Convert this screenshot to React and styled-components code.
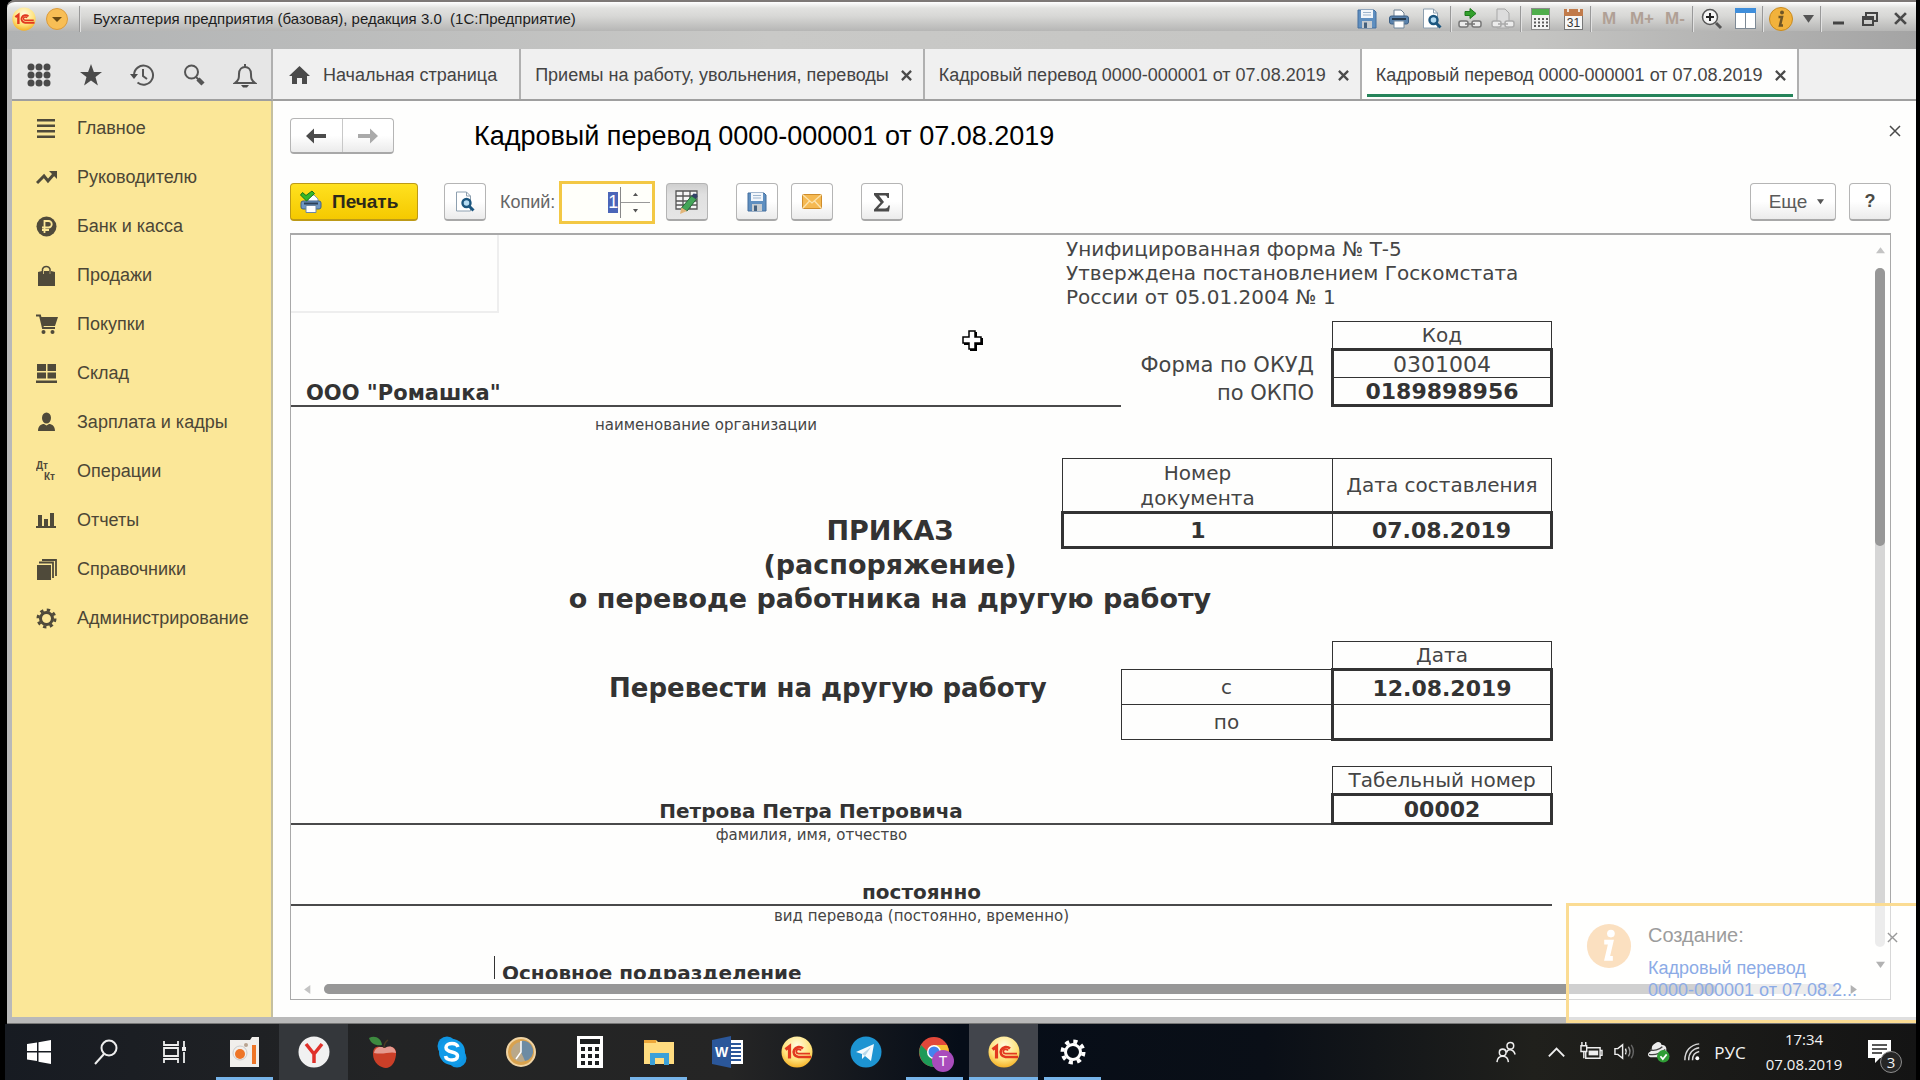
import React, { useEffect, useRef } from 'react';
import styled, { createGlobalStyle, css } from 'styled-components';

const GlobalStyle = createGlobalStyle`
  * {
    box-sizing: border-box;
  }

  body {
    margin: 0;
    background: #000;
    font-family: 'Liberation Sans', Arial, sans-serif;
    font-size: 18px;
    color: #4b4b45;
  }

  button {
    padding: 0;
    border: none;
    background: none;
    font: inherit;
    color: inherit;
  }

  svg {
    display: block;
    flex: none;
  }
`;

const Screen = styled.div`
  position: relative;
  display: flex;
  flex-direction: column;
  height: 100vh;
  overflow: hidden;
`;

/* ---------- 1C window ---------- */

const Window = styled.div`
  flex: 1;
  min-height: 0;
  display: flex;
  flex-direction: column;
  margin: 0 4px 0 7px;
  padding: 0 0 6px 5px;
  border-bottom: 1px solid #777;
  border-radius: 8px 0 0 0;
  background: #b9b9b9;
`;

const TitleBar = styled.header`
  height: 49px;
  flex: none;
  margin-left: -5px;
  padding: 4px 0 18px 5px;
  display: flex;
  align-items: center;
  border-top: 2px solid #7d7876;
  border-radius: 8px 0 0 0;
  background: linear-gradient(90deg, #b0b2b3, #c9c9c7 40%, #c4c4c2 80%, #a4a4a4) 0 29px / 100% 18px no-repeat,
    linear-gradient(#fff 0, #e2e2e0 6px, #d8d8d6 14px, #b6b6b5 29px);
`;

const RoundButton = styled.button`
  width: 24px;
  height: 24px;
  margin-right: 9px;
`;

const TitleText = styled.h1`
  flex: 1;
  margin: 0;
  padding-left: 11px;
  font-size: 15px;
  font-weight: normal;
  white-space: pre;
  color: #1d1d1d;
`;

const TitleTools = styled.div`
  display: flex;
  align-items: center;
`;

const ToolIcon = styled.button`
  width: ${p => p.$width || 34}px;
  height: 24px;
  display: flex;
  align-items: center;
  justify-content: center;
  font-size: 17px;
  font-weight: bold;
  color: #b0a095;
`;

const Separator = styled.span`
  width: 2px;
  height: 26px;
  margin: 0 1px;
  border-left: 1px solid #999;
  border-right: 1px solid #e2e2e2;
`;

const Workspace = styled.div`
  flex: 1;
  min-height: 0;
  display: grid;
  grid-template-columns: 261px 1fr;
  grid-template-rows: 52px 1fr;
  background: #fefefd;
`;

const QuickTools = styled.div`
  display: flex;
  align-items: center;
  justify-content: space-between;
  padding: 2px 13px 0 14px;
  border-right: 2px solid #b0b0b0;
  border-bottom: 2px solid #9f9f9f;
  background: #e6e6e6;
  button {
    width: 26px;
    display: flex;
    justify-content: center;
  }
`;

const Tabs = styled.nav`
  display: flex;
  border-bottom: 2px solid #9f9f9f;
  background: #f0f0f0;
`;

const Tab = styled.div`
  position: relative;
  display: flex;
  align-items: center;
  gap: 12px;
  padding: 2px 11px 0 14px;
  border-right: 2px solid #b0b0b0;
  white-space: nowrap;
  color: #444;
  ${p =>
    p.$active &&
    css`
      background: #fefefd;
      &::after {
        content: '';
        position: absolute;
        left: 5px;
        right: 4px;
        bottom: 2px;
        height: 3px;
        background: #26845a;
      }
    `}
`;

const HomeTab = styled(Tab)`
  gap: 13px;
  padding: 2px 22px 0 16px;
`;

const Sidebar = styled.ul`
  margin: 0;
  padding: 3px 0 0;
  list-style: none;
  border-right: 2px solid #c5c0a0;
  background: #fbe798;
`;

const SideLink = styled.a`
  height: 49px;
  display: flex;
  align-items: center;
  gap: 19px;
  padding-left: 24px;
  color: #4b4636;
  text-decoration: none;
`;

const Main = styled.main`
  min-width: 0;
  min-height: 0;
  display: flex;
  flex-direction: column;
  padding: 17px 25px 17px 17px;
`;

const FormHead = styled.div`
  height: 36px;
  display: flex;
  align-items: center;
  margin-bottom: 26px;
  h2 {
    flex: 1;
    margin: 0;
    padding-left: 80px;
    font-size: 27px;
    font-weight: normal;
    line-height: 38px;
    color: #000;
  }
`;

const raised = css`
  border: 1px solid #b5b5b5;
  border-bottom: 2px solid #a8a8a8;
  border-radius: 4px;
  background: linear-gradient(#fff 50%, #ebebeb);
`;

const History = styled.div`
  ${raised}
  display: flex;
  width: 104px;
  height: 36px;
  button {
    flex: 1;
    display: flex;
    align-items: center;
    justify-content: center;
  }
  button + button {
    border-left: 1px solid #c8c8c8;
  }
`;

const CloseForm = styled.button`
  align-self: flex-start;
  margin: 7px -10px 0 0;
`;

const CommandBar = styled.div`
  height: 44px;
  display: flex;
  align-items: center;
  margin-bottom: 9px;
`;

const Button = styled.button`
  ${raised}
  width: ${p => p.$width || 42}px;
  height: 38px;
  margin-left: ${p => p.$gap || 0}px;
  display: flex;
  align-items: center;
  justify-content: center;
  gap: 10px;
  ${p =>
    p.$pressed &&
    css`
      background: linear-gradient(#cfcfcf, #e0e0e0 30%, #e6e6e6);
    `}
`;

const PrintButton = styled(Button)`
  justify-content: flex-start;
  padding-left: 9px;
  border-color: #bd9a17;
  background: linear-gradient(#ffe11f, #f5c900);
  font-size: 19px;
  font-weight: bold;
  color: #2c2a1a;
`;

const MoreButton = styled(Button)`
  padding-left: 7px;
  font-size: 19px;
  color: #5a5a5a;
`;

const CopiesLabel = styled.label`
  margin: 0 4px 0 14px;
  color: #666;
`;

const Spinner = styled.div`
  width: 96px;
  height: 43px;
  display: flex;
  align-items: center;
  padding: 3px 2px;
  border: 3px solid #f3c844;
  background: #fffffa;
  input {
    flex: 1;
    min-width: 0;
    padding: 0 2px 0 0;
    border: none;
    outline: none;
    background: none;
    font: inherit;
    text-align: right;
    color: #333;
  }
  input::selection {
    background: #4c66b8;
    color: #fff;
  }
`;

const Steps = styled.div`
  width: 30px;
  align-self: stretch;
  display: flex;
  flex-direction: column;
  border-left: 1px solid #888;
  button {
    flex: 1;
    display: flex;
    align-items: center;
    justify-content: center;
  }
  button + button {
    border-top: 1px solid #999;
  }
`;

const Grow = styled.span`
  flex: 1;
`;

/* ---------- printed form ---------- */

const Viewer = styled.section`
  position: relative;
  flex: 1;
  min-height: 0;
  display: grid;
  grid-template-columns: 1fr 20px;
  grid-template-rows: 1fr 20px;
  border: 1px solid #a9a9a9;
  border-top-width: 2px;
`;

const Paper = styled.div`
  overflow: hidden;
  font-family: 'DejaVu Sans', Verdana, sans-serif;
  font-size: 20px;
  color: #454545;
`;

const Sheet = styled.div`
  width: 1262px;
`;

const SheetTop = styled.div`
  height: 86px;
  display: grid;
  grid-template-columns: 775px 1fr;
`;

const EmptyPicture = styled.div`
  width: 208px;
  height: 78px;
  border-right: 2px solid #eee;
  border-bottom: 2px solid #eee;
`;

const FormNote = styled.p`
  margin: 0;
  padding-top: 2px;
  line-height: 24px;
  white-space: nowrap;
`;

const Row = styled.div`
  display: flex;
  align-items: flex-end;
`;

const Underlined = styled.div`
  width: ${p => p.$width}px;
  padding: ${p => (p.$left ? '0 0 0 15px' : '0')};
  border-bottom: 2px solid #4a4a4a;
  font-size: ${p => (p.$left ? 21 : 20)}px;
  line-height: 24px;
  font-weight: bold;
  text-align: ${p => (p.$left ? 'left' : 'center')};
  color: #333;
`;

const Caption = styled.p`
  width: ${p => p.$width}px;
  margin: 0;
  padding-top: ${p => p.$gap || 0}px;
  font-size: 15px;
  line-height: 20px;
  text-align: center;
`;

const CodeLabels = styled.div`
  flex: 1;
  padding-right: 17px;
  line-height: 28px;
  text-align: right;
  font-size: 21px;
`;

const FormTable = styled.table`
  width: ${p => p.$width}px;
  border-collapse: collapse;
  table-layout: fixed;
  color: #454545;
`;

const Cell = styled.td`
  width: ${p => (p.$width ? `${p.$width}px` : 'auto')};
  height: ${p => p.$height || 28}px;
  padding: 1px 0 0;
  border: ${p => (p.$blank ? 'none' : '1px solid #333')};
  font-size: ${p => (p.$value ? 22 : 20)}px;
  font-weight: ${p => (p.$bold ? 'bold' : 'normal')};
  line-height: 25px;
  text-align: center;
  vertical-align: middle;
  color: ${p => (p.$bold ? '#333' : 'inherit')};
`;

const StrongRows = styled.tbody`
  border: 3px solid #333;
`;

const StrongCell = styled(Cell)`
  border-left: 3px solid #333;
  border-right: 3px solid #333;
  border-${p => p.$edge}: 3px solid #333;
`;

const OrderHead = styled.div`
  display: grid;
  grid-template-columns: 770px 1fr;
  grid-template-rows: 90px auto;
  margin-top: 23px;
`;

const OrderNumber = styled.div`
  grid-area: 1 / 2;
`;

const OrderTitle = styled.h3`
  grid-area: 1 / 1 / 3 / 3;
  margin: 0;
  padding: 56px 64px 0 0;
  font-size: 27px;
  line-height: 34px;
  text-align: center;
  color: #333;
`;

const Transfer = styled.div`
  display: flex;
  margin-top: 25px;
  h4 {
    flex: 1;
    margin: 0;
    padding: 30px 0 0 318px;
    font-size: 26px;
    line-height: 34px;
    white-space: nowrap;
    color: #333;
  }
`;

const Person = styled(Row)`
  margin-top: 25px;
`;

const Kind = styled.div`
  margin-top: 35px;
`;

const Department = styled.div`
  margin: 30px 0 0 203px;
  padding: 5px 0 0 7px;
  border-left: 1px solid #333;
  font-weight: bold;
  line-height: 24px;
  color: #333;
`;

const VScroll = styled.div`
  display: flex;
  flex-direction: column;
  align-items: center;
  padding: 11px 0 10px;
`;

const HScroll = styled.div`
  display: flex;
  align-items: center;
  padding: 0 12px 0 12px;
`;

const Track = styled.div`
  flex: 1;
  display: flex;
  flex-direction: inherit;
  margin: ${p => (p.$vertical ? '13px 0' : '0 12px')};
  width: ${p => (p.$vertical ? '10px' : 'auto')};
  height: ${p => (p.$vertical ? 'auto' : '10px')};
  border-radius: 5px;
  background: #d6d6d6;
`;

const Thumb = styled.div`
  flex: 0 0 ${p => p.$size};
  border-radius: 5px;
  background: #979797;
`;

const CrossCursor = styled.svg`
  position: absolute;
  left: 671px;
  top: 95px;
`;

/* ---------- toast ---------- */

const Toast = styled.aside`
  position: absolute;
  right: 4px;
  bottom: 57px;
  width: 350px;
  height: 120px;
  display: flex;
  gap: 16px;
  padding: 17px 18px 0 17px;
  border: 3px solid #fbdc93;
  border-right: none;
  background: rgba(255, 255, 255, 0.55);
  h5 {
    margin: 0 0 10px;
    font-size: 20px;
    font-weight: normal;
    line-height: 24px;
    color: #9c9c9c;
  }
  a {
    font-size: 18px;
    line-height: 22px;
    text-decoration: none;
    color: #8cabe6;
  }
`;

const ToastClose = styled.button`
  align-self: flex-start;
  margin: 9px 0 0 auto;
`;

/* ---------- taskbar ---------- */

const TaskBar = styled.footer`
  height: 56px;
  flex: none;
  display: flex;
  margin: 0 4px 0 5px;
  background: linear-gradient(90deg, #171b22, #232425 20%, #252525 38%, #060d18 50%, #0a0f17 66%, #20201c 80%, #141414);
  color: #f3f3f3;
`;

const Task = styled.button`
  position: relative;
  width: 69px;
  display: flex;
  align-items: center;
  justify-content: center;
  background: ${p => (p.$lit ? p.$lit : 'transparent')};
  &:first-child {
    width: 67px;
  }
  ${p =>
    p.$open &&
    css`
      &::after {
        content: '';
        position: absolute;
        left: ${p.$open === 'full' ? 0 : 6}px;
        right: ${p.$open === 'full' ? 0 : 6}px;
        bottom: 0;
        height: 3px;
        background: #76b3e8;
      }
    `}
`;

const Tray = styled.div`
  margin-left: auto;
  display: flex;
  align-items: center;
  font-family: 'Open Sans', 'Noto Sans', sans-serif;
  font-size: 15px;
  line-height: 25px;
`;

const TrayIcon = styled.button`
  width: 34px;
  display: flex;
  justify-content: center;
`;

const People = styled(TrayIcon)`
  width: 66px;
`;

const Language = styled(TrayIcon)`
  width: 40px;
  font-size: 17px;
`;

const Clock = styled.time`
  width: 108px;
  text-align: center;
`;

const Notice = styled.button`
  position: relative;
  width: 58px;
  padding-left: 10px;
`;

const Badge = styled.span`
  position: absolute;
  left: 22px;
  top: 11px;
  width: 22px;
  height: 22px;
  border: 1px solid #8c8c8c;
  border-radius: 50%;
  background: #262626;
  font-size: 15px;
  line-height: 20px;
`;

/* ---------- drawings ---------- */

const OneC = ({ size = 24 }) => (
  <svg width={size} height={size} viewBox="0 0 32 32">
    <defs>
      <radialGradient id="onec" cx="50%" cy="30%" r="75%">
        <stop offset="0" stopColor="#fffbe0" />
        <stop offset="0.6" stopColor="#ffe27a" />
        <stop offset="1" stopColor="#f2a818" />
      </radialGradient>
    </defs>
    <circle cx="16" cy="16" r="15.500" fill="url(#onec)" />
    <path d="M4.500 13.500l4-3v12" fill="none" stroke="#e2381f" strokeWidth="3.200" />
    <path d="M22 12.500a5.500 5 0 1 0-4.500 8.500H30" fill="none" stroke="#e2381f" strokeWidth="2.600" />
    <path d="M20 14.500a2.500 2.200 0 1 0-2 3.200H29" fill="none" stroke="#e2381f" strokeWidth="1.800" />
  </svg>
);

const Ball = () => (
  <svg width="24" height="24" viewBox="0 0 24 24">
    <circle cx="12" cy="12" r="10.500" fill="#f8be55" stroke="#dc9b3a" />
    <path d="M7 10h10l-5 5z" fill="#6b4a12" />
  </svg>
);

const Floppy = () => (
  <svg width="20" height="20" viewBox="0 0 20 20">
    <path d="M1 1h16l2 2v16H1z" fill="#5f8fc0" stroke="#456f9e" />
    <path d="M4 1h12v8H4z" fill="#f2f6fb" />
    <path d="M6 3.500h8M6 6h8" stroke="#9cb4cd" />
    <path d="M5 12h10v7H5z" fill="#c7ccd0" />
    <path d="M7 13.500h3V19H7z" fill="#45617e" />
  </svg>
);

const Printer = () => (
  <svg width="20" height="20" viewBox="0 0 20 20">
    <path d="M5 1h7l3 3v4H5z" fill="#fff" stroke="#6d7f90" />
    <rect x="0.500" y="7" width="19" height="8" rx="2" fill="#5a83ad" stroke="#3c5f84" />
    <path d="M3 10h14" stroke="#27394b" strokeWidth="2" />
    <path d="M5 12h10v7H5z" fill="#fff" stroke="#71879c" />
  </svg>
);

const PrintReady = () => (
  <svg width="22" height="24" viewBox="0 0 22 24">
    <path d="M8 5h6l4 4v4H8z" fill="#fff" stroke="#8899a8" />
    <rect x="1" y="11" width="20" height="8" rx="2" fill="#6f97c4" stroke="#3f6187" />
    <path d="M4 13.500h14" stroke="#2c4058" strokeWidth="2" />
    <path d="M6 15.500h10v7H6z" fill="#fff" stroke="#6d87a5" />
    <path d="M2.500 2.500l3.500 3 6-4.500 2.500 2.500L6.500 11 .500 5z" fill="#35b82a" stroke="#17741a" />
  </svg>
);

const Preview = () => (
  <svg width="20" height="21" viewBox="0 0 20 21">
    <path d="M1.500 1h10l4 4v15h-14z" fill="#fff" stroke="#8ea0b0" />
    <path d="M11.500 1v4h4" fill="none" stroke="#8ea0b0" />
    <circle cx="11.500" cy="12" r="4" fill="#b6dcf2" stroke="#1c567f" strokeWidth="2.400" />
    <path d="M14.500 15.500l4 4" stroke="#1c567f" strokeWidth="3" />
  </svg>
);

const Link = ({ up }) => (
  <svg width="24" height="22" viewBox="0 0 24 22">
    {up ? (
      <path d="M7 3.500h5V.500l6 5-6 5v-3H7z" fill="#33a02c" stroke="#1d7a1b" />
    ) : (
      <path d="M6 1h8l4 4v15H6z" fill="#dcdcdc" stroke="#a7a7a7" />
    )}
    <g fill="#ececec" stroke={up ? '#777' : '#aaa'} strokeWidth="1.500">
      <rect x="1" y="13" width="9" height="6" rx="2" />
      <rect x="14" y="13" width="9" height="6" rx="2" />
      <path d="M7 16h10" />
    </g>
  </svg>
);

const Calc = () => (
  <svg width="19" height="22" viewBox="0 0 19 22">
    <rect x="0.500" y="0.500" width="18" height="21" fill="#f3f3f3" stroke="#8b8b8b" />
    <path d="M1 1h17v6H1z" fill="#4fae4c" />
    <path d="M4 10v10M8 10v10M12 10v10M16 10v10" stroke="#5d5d5d" strokeWidth="2" strokeDasharray="2 1.500" />
  </svg>
);

const Calendar = () => (
  <svg width="19" height="22" viewBox="0 0 19 22">
    <rect x="0.500" y="2.500" width="18" height="19" fill="#f7f7f7" stroke="#777" />
    <path d="M0 1h19v7H0z" fill="#c17b4b" />
    <path d="M4 0v4M15 0v4" stroke="#efe5dc" strokeWidth="2" />
    <text x="9.500" y="18.500" fontSize="12" textAnchor="middle" fill="#333" fontWeight="normal">31</text>
  </svg>
);

const ZoomIn = () => (
  <svg width="22" height="22" viewBox="0 0 22 22">
    <circle cx="9" cy="9" r="7.500" fill="#f4f4f4" stroke="#555" strokeWidth="1.500" />
    <path d="M9 5v8M5 9h8" stroke="#222" strokeWidth="2" />
    <path d="M15 15l5 5" stroke="#555" strokeWidth="3" />
  </svg>
);

const Columns = () => (
  <svg width="21" height="21" viewBox="0 0 21 21">
    <rect x="0.500" y="0.500" width="20" height="20" fill="#fff" stroke="#7d8995" />
    <path d="M0 0h21v5H0z" fill="#3f8edb" />
    <path d="M10.500 5v16" stroke="#7d8995" />
  </svg>
);

const Info = ({ size = 24, pale }) => (
  <svg width={size} height={size} viewBox="0 2 24 24">
    <circle cx="12" cy="14" r="11.500" fill={pale ? '#fbe0c0' : '#f2b23c'} stroke={pale ? 'none' : '#c98a1e'} />
    <circle cx="13" cy="7.500" r="2" fill={pale ? '#fff' : '#6f5526'} />
    <path d="M9.500 12h3.500l-2 8.500h3" fill="none" stroke={pale ? '#fff' : '#6f5526'} strokeWidth="2.500" />
  </svg>
);

const Caret = ({ size = 8, dir = 'down', color = '#555' }) => {
  const turn = { down: 0, left: 90, up: 180, right: 270 }[dir];
  return (
    <svg width={size} height={size} viewBox="0 0 8 8">
      <path d="M0 1.500h8L4 7z" fill={color} transform={`rotate(${turn} 4 4)`} />
    </svg>
  );
};

const Cross = ({ size = 11, width = 2.500, color = '#4a4a4a' }) => (
  <svg width={size} height={size} viewBox="0 0 12 12">
    <path d="M1 1l10 10M11 1L1 11" stroke={color} strokeWidth={width} />
  </svg>
);

const Arrow = ({ back }) => (
  <svg width="20" height="16" viewBox="0 0 20 16">
    {back ? (
      <path d="M0 8l8-7.500V6h12v4H8v5.500z" fill="#4b4b4b" />
    ) : (
      <path d="M20 8l-8-7.500V6H0v4h12v5.500z" fill="#aaa" />
    )}
  </svg>
);

const Apps = () => (
  <svg width="24" height="24" viewBox="0 0 24 24" fill="#4a4a4a">
    {[4, 12, 20].map(y => [4, 12, 20].map(x => <circle key={`${x}-${y}`} cx={x} cy={y} r="3.500" />))}
  </svg>
);

const Star = () => (
  <svg width="24" height="24" viewBox="0 0 24 24">
    <path d="M12 1l2.900 8H23l-6.500 5 2.400 8.500L12 17.500 5.100 22.500 7.500 14 1 9h8.100z" fill="#4a4a4a" />
  </svg>
);

const Recent = () => (
  <svg width="25" height="24" viewBox="0 0 25 24" fill="none" stroke="#555" strokeWidth="2">
    <path d="M4 12a9.500 9.500 0 1 1 3.500 7.500" />
    <path d="M0 11h8l-4 5z" fill="#4a4a4a" stroke="none" />
    <path d="M13 6v7l4 3" />
  </svg>
);

const Magnifier = () => (
  <svg width="24" height="24" viewBox="0 0 24 24" fill="none" stroke="#555">
    <circle cx="9.500" cy="9" r="6.500" strokeWidth="2" />
    <path d="M14 14l3 3" strokeWidth="2" />
    <path d="M16 16l5 5" strokeWidth="4.500" />
  </svg>
);

const Bell = () => (
  <svg width="24" height="25" viewBox="0 0 24 25" fill="none" stroke="#555" strokeWidth="2">
    <path d="M2 20h20c-4-3-4-5-4-9 0-5-3-7-6-7s-6 2-6 7c0 4 0 6-4 9zM12 1v3" />
    <path d="M8 22h8l-2 2.500h-4z" fill="#4a4a4a" stroke="none" />
  </svg>
);

const House = () => (
  <svg width="21" height="18" viewBox="0 0 21 18">
    <path d="M10.500 0L21 10h-3v8h-5v-6H8v6H3v-8H0z" fill="#4a4a4a" />
  </svg>
);

const sideIcons = {
  list: <path d="M1 1h18v2.500H1zM1 6.500h18V9H1zM1 12h18v2.500H1zM1 17.500h18V20H1z" />,
  trend: (
    <>
      <path d="M1 16l7-7 4 5 6-7" fill="none" stroke="#4f4a3a" strokeWidth="3" />
      <path d="M13 4h8v8z" />
    </>
  ),
  ruble: (
    <>
      <circle cx="10.500" cy="10.500" r="10" />
      <path d="M8.500 17V5h4a3 3 0 0 1 0 6.500H6M6 14h7" fill="none" stroke="#fbe798" strokeWidth="1.800" />
    </>
  ),
  bag: (
    <>
      <path d="M2 7l4-1v3h2V6h5v3h2V6l4 1v14H2z" />
      <path d="M6.500 9V4a4 4 0 0 1 7.500 0v5" fill="none" stroke="#4f4a3a" strokeWidth="1.500" />
    </>
  ),
  cart: (
    <>
      <path d="M4 3h18l-3 9H7z" />
      <path d="M0 1.500h4l3 12.500h12" fill="none" stroke="#4f4a3a" strokeWidth="2" />
      <circle cx="7.500" cy="18" r="2" />
      <circle cx="16.500" cy="18" r="2" />
    </>
  ),
  store: <path d="M1 1h9v7H1zM11.500 1H20v7h-8.500zM1 9.500h9v6H1zM11.500 9.500H20v6h-8.500zM0 17.500h21V20H0z" />,
  person: (
    <>
      <ellipse cx="10.500" cy="6" rx="4.500" ry="5.500" />
      <path d="M2 19c0-6 4-7 6-7l2.500 1.500L13 12c2 0 6 1 6 7z" />
    </>
  ),
  dtkt: (
    <g fontSize="10" fontWeight="bold">
      <text x="0" y="8">Дт</text>
      <text x="8" y="19">Кт</text>
    </g>
  ),
  bars: <path d="M2 5h4v11H2zM8 9h4v7H8zM14 3h4v13h-4zM0 16h20v2H0z" />,
  books: (
    <>
      <path d="M1 6h14v15H1z" />
      <path d="M3 3.500h14V19M6 1h14v16" fill="none" stroke="#4f4a3a" strokeWidth="1.800" />
    </>
  ),
  gear: (
    <>
      <circle cx="10.500" cy="10.500" r="6" fill="none" stroke="#4f4a3a" strokeWidth="3" />
      <circle cx="10.500" cy="10.500" r="8.500" fill="none" stroke="#4f4a3a" strokeWidth="3" strokeDasharray="3.300 3.376" />
    </>
  ),
};

const SideIcon = ({ name }) => (
  <svg width="22" height="22" viewBox="0 0 22 22" fill="#4f4a3a">
    {sideIcons[name]}
  </svg>
);

const EditTable = () => (
  <svg width="24" height="24" viewBox="0 0 24 24">
    <path d="M1 1h21v18H1zM1 6h21M1 11h21M1 15h21M8 1v18M15 1v18" fill="#f5f5f5" stroke="#555" strokeWidth="1.300" />
    <path d="M6.500 18l10-12 5 3-9.500 12z" fill="#44a558" stroke="#27693a" />
    <path d="M16.500 6l2-2.500 3.500.500.500 2.500L21 9z" fill="#334166" />
    <path d="M5 24l1.500-6.500 5.500 3.500z" fill="#e2b578" />
  </svg>
);

const Envelope = () => (
  <svg width="20" height="15" viewBox="0 0 20 15">
    <rect x="0.500" y="0.500" width="19" height="14" rx="1" fill="#f5b952" stroke="#cf8d2c" />
    <path d="M1 1l9 8 9-8M1 14l6.500-7M19 14l-6.500-7" fill="none" stroke="#fbe3ae" strokeWidth="1.300" />
  </svg>
);

const Sigma = () => (
  <svg width="18" height="20" viewBox="0 0 18 20">
    <path d="M1 1h15v5h-1.500c-.5-2-1.500-2.500-3-2.500H6l5 6.500-6 6.500h7c2 0 3-1 3.500-3H17l-1 6H1v-2l6.500-7L1 3z" fill="#4a4a4a" />
  </svg>
);

const taskIcons = {
  start: <path d="M4 8l10-1.500V15H4zM15.500 6.200L28 4v11H15.500zM4 16.500h10V25L4 23.500zM15.500 16.500H28V28l-12.500-2.200z" fill="#fff" />,
  search: (
    <g fill="none" stroke="#eee" strokeWidth="2">
      <circle cx="18" cy="12" r="7.500" />
      <path d="M13 18L4 28" />
    </g>
  ),
  view: (
    <g fill="none" stroke="#eee" strokeWidth="1.800">
      <path d="M4 5v4h14V5M4 27v-4h14v4M4 12h14v8H4zM24 5v7M24 16v11" />
      <path d="M22 11h4v4h-4z" fill="#eee" stroke="none" />
    </g>
  ),
  recorder: (
    <>
      <path d="M1 4h20l2-3h7v30H1z" fill="#f1efec" />
      <circle cx="11" cy="17" r="7" fill="#f1efec" stroke="#ccc" />
      <circle cx="11" cy="18" r="5" fill="#ee7527" />
      <circle cx="17" cy="9" r="2" fill="#b9a391" />
      <path d="M23 9h4v19h-4z" fill="#ee7527" />
    </>
  ),
  yandex: (
    <>
      <circle cx="16" cy="16" r="15.500" fill="#f1f1f1" />
      <path d="M8 8l8 10 8-10M16 17v10" fill="none" stroke="#e0302a" strokeWidth="3.500" />
    </>
  ),
  apple: (
    <>
      <path d="M18 12c7-3 12 0 11 7-1 8-5 13-10 13S6 27 6 18s6-8 12-6z" fill="#cb3f28" />
      <path d="M7 17c2-8 8-6 11-5 5-3 10-1 11 5-6-2-12 2-22 0z" fill="#e59a90" />
      <path d="M2 2c6-3 12 0 13 7C9 10 4 8 2 2z" fill="#3d8a3f" />
      <path d="M17 12c0-4 1-6 4-8" fill="none" stroke="#4a3a22" strokeWidth="1.500" />
    </>
  ),
  skype: (
    <>
      <circle cx="11" cy="10" r="9.500" fill="#0f95e3" />
      <circle cx="21" cy="22" r="9.500" fill="#0f95e3" />
      <circle cx="16" cy="16" r="13" fill="#119be8" />
      <path d="M22 11c-1-3-4-3.500-6-3.500-3 0-6 1.500-6 4 0 6 11.500 3 11.500 8.500 0 3-3 4-5.500 4-3 0-6-1-6.500-4" fill="none" stroke="#fff" strokeWidth="3.500" />
    </>
  ),
  timer: (
    <>
      <circle cx="16" cy="16" r="14" fill="#d9a24e" stroke="#efd3a3" strokeWidth="2" />
      <circle cx="16" cy="16" r="10" fill="#b9a88a" />
      <path d="M16 16V5a10 10 0 0 1 4 20z" fill="#6d8ba3" />
      <path d="M16 5v11l-5 7" fill="none" stroke="#fff" strokeWidth="1.500" />
    </>
  ),
  calc: (
    <>
      <path d="M3 0h26v32H3z" fill="#fff" />
      <path d="M6 3h20v5H6zM7 11h4v4H7zM14 11h4v4h-4zM21 11h4v4h-4zM7 18h4v4H7zM14 18h4v4h-4zM21 18h4v4h-4zM7 25h4v4H7zM14 25h4v4h-4zM21 25h4v4h-4z" fill="#1d1f21" />
    </>
  ),
  explorer: (
    <>
      <path d="M1 4h12l2 2h16v22H1z" fill="#ffdc80" />
      <path d="M1 4h12v3H1z" fill="#eda73a" />
      <path d="M7 17h19v12h-5v-7h-9v7H7z" fill="#3ba0d8" />
    </>
  ),
  word: (
    <>
      <path d="M16 4h15v24H16z" fill="#fff" />
      <path d="M19 8h10M19 12h10M19 16h10M19 20h10M19 24h10" stroke="#2b579a" strokeWidth="2" />
      <path d="M0 4l19-4v32L0 28z" fill="#2b579a" />
      <text x="9.500" y="21" fontSize="14" fontWeight="bold" textAnchor="middle" fill="#fff">W</text>
    </>
  ),
  telegram: (
    <>
      <circle cx="16" cy="16" r="15.500" fill="#1d94d2" />
      <path d="M6 16l18-8-3 17-6-5-3 3v-5z" fill="#f4fafd" />
      <path d="M12 18l9-7-6 9z" fill="#b7d8ea" />
    </>
  ),
  chrome: (
    <>
      <circle cx="15" cy="16" r="15" fill="#e2483a" />
      <path d="M15 16l-1-7h14a15 15 0 0 1-14 22z" fill="#f6c034" />
      <path d="M2 9l9 9 4 13A15 15 0 0 1 2 9z" fill="#1d9a58" />
      <circle cx="15" cy="16" r="7" fill="#fff" />
      <circle cx="15" cy="16" r="5.500" fill="#4484ee" />
      <circle cx="24" cy="25" r="11" fill="#a94cbc" />
      <text x="24" y="30" fontSize="14" textAnchor="middle" fill="#fff">T</text>
    </>
  ),
  settings: (
    <g fill="none" stroke="#fff">
      <circle cx="16" cy="16" r="7.500" strokeWidth="3" />
      <circle cx="16" cy="16" r="10.500" strokeWidth="4" strokeDasharray="4.100 4.147" />
    </g>
  ),
};

const TaskIcon = ({ name }) =>
  name === 'onec' ? (
    <OneC size={32} />
  ) : (
    <svg width="32" height="32" viewBox="0 0 32 32" overflow="visible">
      {taskIcons[name]}
    </svg>
  );

const tray = {
  people: (
    <g fill="none" stroke="#eee" strokeWidth="1.600">
      <circle cx="15" cy="5" r="3.500" />
      <path d="M11 12c1-4 7-4 9 2" />
      <circle cx="7" cy="12" r="3.500" />
      <path d="M1 22c1-8 11-8 12 0" />
    </g>
  ),
  up: <path d="M3 16l8-8 8 8" fill="none" stroke="#eee" strokeWidth="2" />,
  battery: (
    <>
      <path d="M6 7h15v11H6zM21 10h2v5h-2" fill="none" stroke="#eee" strokeWidth="1.500" />
      <path d="M9 10h10v5H9z" fill="#eee" />
      <path d="M1 5h6v6H1zM2 1v4M6 1v4M4 11v7" fill="#1d1d1a" stroke="#eee" strokeWidth="1.500" />
    </>
  ),
  volume: (
    <g fill="none" stroke="#eee" strokeWidth="1.500">
      <path d="M1 8h3l5-4v14l-5-4H1z" />
      <path d="M12 8c1 2 1 4 0 6" />
      <path d="M15 6c2 3 2 7 0 10" stroke="#999" />
      <path d="M18 4c3 4 3 10 0 14" stroke="#666" />
    </g>
  ),
  hat: (
    <>
      <path d="M8 2c3-2 6 0 6 2 4 0 6 3 5 6 3 3 0 7-5 7H4c-4 0-5-3-3-5 2-1 3-2 3-5 0-2 2-4 4-5z" fill="#ececec" />
      <path d="M2 9c4 2 10 0 13-3M1 14c5 1 12-1 17-5" fill="none" stroke="#444" strokeWidth="1.300" />
      <circle cx="16" cy="16" r="6.500" fill="#2f9d35" />
      <path d="M13 16l2.500 3 4-5" fill="none" stroke="#fff" strokeWidth="1.800" />
    </>
  ),
  wifi: (
    <g fill="none" stroke="#d8d8d8" strokeWidth="1.500">
      <path d="M3 20C3 10 9 4 18 3M7 20c0-7 4-12 11-13M11 20c0-4 2-8 7-9" />
      <circle cx="16" cy="18" r="2" fill="#fff" stroke="none" />
    </g>
  ),
};

const TraySvg = ({ name }) => (
  <svg width="24" height="22" viewBox="0 0 23 23">
    {tray[name]}
  </svg>
);

/* ---------- data ---------- */

const sections = [
  ['list', 'Главное'],
  ['trend', 'Руководителю'],
  ['ruble', 'Банк и касса'],
  ['bag', 'Продажи'],
  ['cart', 'Покупки'],
  ['store', 'Склад'],
  ['person', 'Зарплата и кадры'],
  ['dtkt', 'Операции'],
  ['bars', 'Отчеты'],
  ['books', 'Справочники'],
  ['gear', 'Администрирование'],
];

const DOC = 'Кадровый перевод 0000-000001 от 07.08.2019';

const tabs = ['Приемы на работу, увольнения, переводы', DOC, DOC];

const tasks = [
  { icon: 'start', label: 'Пуск' },
  { icon: 'search', label: 'Поиск' },
  { icon: 'view', label: 'Представление задач' },
  { icon: 'recorder', label: 'Запись', open: true },
  { icon: 'yandex', label: 'Яндекс', lit: '#34373b' },
  { icon: 'apple', label: 'Яблоко' },
  { icon: 'skype', label: 'Skype' },
  { icon: 'timer', label: 'Часы' },
  { icon: 'calc', label: 'Калькулятор' },
  { icon: 'explorer', label: 'Проводник', open: true },
  { icon: 'word', label: 'Word' },
  { icon: 'onec', label: '1С' },
  { icon: 'telegram', label: 'Telegram' },
  { icon: 'chrome', label: 'Chrome', open: true },
  { icon: 'onec', label: '1С:Предприятие', open: 'full', lit: '#42454c' },
  { icon: 'settings', label: 'Параметры', open: true },
];

function AppTitle() {
  return (
    <TitleBar>
      <RoundButton aria-label="1С"><OneC /></RoundButton>
      <RoundButton aria-label="Меню"><Ball /></RoundButton>
      <Separator />
      <TitleText>{'Бухгалтерия предприятия (базовая), редакция 3.0  (1С:Предприятие)'}</TitleText>
      <TitleTools>
        <ToolIcon $width={32} aria-label="Сохранить"><Floppy /></ToolIcon>
        <ToolIcon $width={32} aria-label="Печать"><Printer /></ToolIcon>
        <ToolIcon aria-label="Просмотр"><Preview /></ToolIcon>
        <Separator />
        <ToolIcon aria-label="Получить ссылку"><Link up /></ToolIcon>
        <ToolIcon $width={32} aria-label="Перейти по ссылке"><Link /></ToolIcon>
        <Separator />
        <ToolIcon aria-label="Калькулятор"><Calc /></ToolIcon>
        <ToolIcon $width={32} aria-label="Календарь"><Calendar /></ToolIcon>
        <Separator />
        <ToolIcon $width={32}>M</ToolIcon>
        <ToolIcon>M+</ToolIcon>
        <ToolIcon $width={32}>M-</ToolIcon>
        <Separator />
        <ToolIcon aria-label="Масштаб"><ZoomIn /></ToolIcon>
        <ToolIcon $width={32} aria-label="Панели"><Columns /></ToolIcon>
        <Separator />
        <ToolIcon $width={32} aria-label="Справка"><Info size={24} /></ToolIcon>
        <ToolIcon $width={22} aria-label="Еще"><Caret size={11} /></ToolIcon>
        <Separator />
        <ToolIcon $width={31} aria-label="Свернуть">
          <svg width="11" height="12"><path d="M0 10h11" stroke="#444" strokeWidth="3" /></svg>
        </ToolIcon>
        <ToolIcon $width={31} aria-label="Восстановить">
          <svg width="16" height="14" fill="none" stroke="#444" strokeWidth="2">
            <path d="M4 5V1h11v8h-4M1 5h10v8H1zM1 7h10" />
          </svg>
        </ToolIcon>
        <ToolIcon $width={31} aria-label="Закрыть"><Cross size={13} width={2.500} /></ToolIcon>
      </TitleTools>
    </TitleBar>
  );
}

function Commands() {
  const copies = useRef(null);

  useEffect(() => {
    copies.current.focus();
    copies.current.select();
  }, []);

  return (
    <CommandBar>
      <PrintButton $width={128}><PrintReady />Печать</PrintButton>
      <Button $gap={26} aria-label="Предварительный просмотр"><Preview /></Button>
      <CopiesLabel htmlFor="copies">Копий:</CopiesLabel>
      <Spinner>
        <input id="copies" ref={copies} defaultValue="1" />
        <Steps>
          <button aria-label="Больше"><Caret size={5} dir="up" /></button>
          <button aria-label="Меньше"><Caret size={5} /></button>
        </Steps>
      </Spinner>
      <Button $gap={11} $pressed aria-label="Редактирование"><EditTable /></Button>
      <Button $gap={28} aria-label="Сохранить"><Floppy /></Button>
      <Button $gap={13} aria-label="Отправить"><Envelope /></Button>
      <Button $gap={28} aria-label="Сумма"><Sigma /></Button>
      <Grow />
      <MoreButton $width={86}>Еще<Caret size={7} /></MoreButton>
      <Button $gap={13}><b>?</b></Button>
    </CommandBar>
  );
}

function PrintedForm() {
  return (
    <Sheet>
      <SheetTop>
        <EmptyPicture />
        <FormNote>
          Унифицированная форма № Т-5<br />
          Утверждена постановлением Госкомстата<br />
          России от 05.01.2004 № 1
        </FormNote>
      </SheetTop>

      <Row>
        <Underlined $width={830} $left>ООО "Ромашка"</Underlined>
        <CodeLabels>
          Форма по ОКУД<br />
          по ОКПО
        </CodeLabels>
        <FormTable $width={222}>
          <thead>
            <tr><Cell as="th">Код</Cell></tr>
          </thead>
          <StrongRows>
            <tr><Cell $value>0301004</Cell></tr>
            <tr><Cell $value $bold>0189898956</Cell></tr>
          </StrongRows>
        </FormTable>
      </Row>
      <Caption $width={830} $gap={8}>наименование организации</Caption>

      <OrderHead>
        <OrderTitle>
          ПРИКАЗ<br />
          (распоряжение)<br />
          о переводе работника на другую работу
        </OrderTitle>
        <OrderNumber>
          <FormTable $width={492}>
            <thead>
              <tr>
                <Cell as="th" $width={270} $height={54}>Номер<br />документа</Cell>
                <Cell as="th">Дата составления</Cell>
              </tr>
            </thead>
            <StrongRows>
              <tr>
                <Cell $value $bold $height={35}>1</Cell>
                <Cell $value $bold>07.08.2019</Cell>
              </tr>
            </StrongRows>
          </FormTable>
        </OrderNumber>
      </OrderHead>

      <Transfer>
        <h4>Перевести на другую работу</h4>
        <FormTable $width={432}>
          <tbody>
            <tr>
              <Cell $blank $width={211} />
              <Cell>Дата</Cell>
            </tr>
            <tr>
              <Cell $height={35}>с</Cell>
              <StrongCell $edge="top" $value $bold>12.08.2019</StrongCell>
            </tr>
            <tr>
              <Cell $height={35}>по</Cell>
              <StrongCell $edge="bottom" />
            </tr>
          </tbody>
        </FormTable>
      </Transfer>

      <Person>
        <Underlined $width={1041}>Петрова Петра Петровича</Underlined>
        <FormTable $width={222}>
          <thead>
            <tr><Cell as="th">Табельный номер</Cell></tr>
          </thead>
          <StrongRows>
            <tr><Cell $value $bold>00002</Cell></tr>
          </StrongRows>
        </FormTable>
      </Person>
      <Caption $width={1041}>фамилия, имя, отчество</Caption>

      <Kind>
        <Underlined $width={1261}>постоянно</Underlined>
        <Caption $width={1261}>вид перевода (постоянно, временно)</Caption>
      </Kind>

      <Department>Основное подразделение</Department>
    </Sheet>
  );
}

export default function App() {
  return (
    <Screen>
      <GlobalStyle />
      <Window>
        <AppTitle />
        <Workspace>
          <QuickTools>
            <button aria-label="Меню функций"><Apps /></button>
            <button aria-label="Избранное"><Star /></button>
            <button aria-label="История"><Recent /></button>
            <button aria-label="Поиск"><Magnifier /></button>
            <button aria-label="Оповещения"><Bell /></button>
          </QuickTools>
          <Tabs>
            <HomeTab><House />Начальная страница</HomeTab>
            {tabs.map((title, i) => (
              <Tab key={i} $active={i === 2}>
                {title}
                <button aria-label="Закрыть вкладку"><Cross /></button>
              </Tab>
            ))}
          </Tabs>
          <Sidebar>
            {sections.map(([icon, title]) => (
              <li key={icon}>
                <SideLink href="#"><SideIcon name={icon} />{title}</SideLink>
              </li>
            ))}
          </Sidebar>
          <Main>
            <FormHead>
              <History>
                <button aria-label="Назад"><Arrow back /></button>
                <button aria-label="Вперед"><Arrow /></button>
              </History>
              <h2>{DOC}</h2>
              <CloseForm aria-label="Закрыть"><Cross size={12} width={1.500} /></CloseForm>
            </FormHead>
            <Commands />
            <Viewer>
              <Paper>
                <PrintedForm />
              </Paper>
              <VScroll>
                <Caret size={9} dir="up" color="#c4c4c4" />
                <Track $vertical><Thumb $size="41%" /></Track>
                <Caret size={9} />
              </VScroll>
              <HScroll>
                <Caret size={9} dir="left" color="#c4c4c4" />
                <Track><Thumb $size="92%" /></Track>
                <Caret size={9} dir="right" />
              </HScroll>
              <CrossCursor width="22" height="22" viewBox="0 0 22 22">
                <path d="M8 2h7v6h6v7h-6v6H8v-6H2V8h6z" fill="#000" />
                <path d="M7 1h6v6h6v6h-6v6H7v-6H1V7h6z" fill="#fff" stroke="#000" strokeWidth="1.500" />
              </CrossCursor>
            </Viewer>
          </Main>
        </Workspace>
      </Window>

      <TaskBar>
        {tasks.map(t => (
          <Task key={t.label} aria-label={t.label} $open={t.open} $lit={t.lit}>
            <TaskIcon name={t.icon} />
          </Task>
        ))}
        <Tray>
          <People aria-label="Люди"><TraySvg name="people" /></People>
          <TrayIcon aria-label="Скрытые значки"><TraySvg name="up" /></TrayIcon>
          <TrayIcon aria-label="Батарея"><TraySvg name="battery" /></TrayIcon>
          <TrayIcon aria-label="Звук"><TraySvg name="volume" /></TrayIcon>
          <TrayIcon aria-label="Защита"><TraySvg name="hat" /></TrayIcon>
          <TrayIcon aria-label="Сеть"><TraySvg name="wifi" /></TrayIcon>
          <Language>РУС</Language>
          <Clock>17:34<br />07.08.2019</Clock>
          <Notice aria-label="Уведомления">
            <svg width="23" height="24" viewBox="0 0 23 24">
              <path d="M0 0h23v18H12l-5 5v-5H0z" fill="#fff" />
              <path d="M4 5h15M4 9h15M4 13h10" stroke="#222" strokeWidth="1.500" />
            </svg>
            <Badge>3</Badge>
          </Notice>
        </Tray>
      </TaskBar>

      <Toast>
        <Info size={46} pale />
        <div>
          <h5>Создание:</h5>
          <a href="#">Кадровый перевод<br />0000-000001 от 07.08.2...</a>
        </div>
        <ToastClose aria-label="Закрыть"><Cross size={11} width={1.500} color="#999" /></ToastClose>
      </Toast>
    </Screen>
  );
}
